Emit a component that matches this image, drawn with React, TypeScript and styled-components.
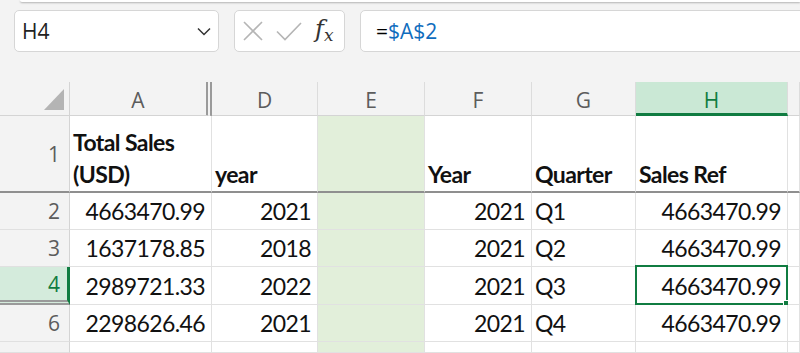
import React from "react";
import styled, { createGlobalStyle, css } from "styled-components";

const GlobalStyle = createGlobalStyle`
  html, body { margin: 0; padding: 0; }
  body {
    background: #f3f3f3;
    font-family: "Open Sans", "Noto Sans", sans-serif;
    overflow: hidden;
  }
`;

const green = "#107c41";
const grid = "#e1e1e1";

const Page = styled.div`
  width: 800px;
  height: 353px;
  overflow: hidden;
  background: #f3f3f3;
  display: flex;
  flex-direction: column;
`;

const TopStrip = styled.div`
  height: 2px;
  margin-left: 20px;
  background: #fff;
  border-bottom-left-radius: 4px;
  box-shadow: 0 1px 2px rgba(0, 0, 0, 0.28);
  flex-shrink: 0;
`;

const Toolbar = styled.div`
  display: flex;
  gap: 15px;
  padding: 8px 0 0 14px;
  height: 42px;
  margin-bottom: 30px;
  flex-shrink: 0;
`;

const Box = styled.div<{ $w?: number }>`
  box-sizing: border-box;
  height: 42px;
  background: #fff;
  border: 1px solid #d6d6d6;
  border-radius: 5px;
  display: flex;
  align-items: center;
  flex-shrink: 0;
  ${(p) => p.$w && css`width: ${p.$w}px;`}
`;

const NameBox = styled(Box)`
  justify-content: space-between;
  padding: 0 6px 0 7px;
  font-size: 21px;
  color: #222;
`;

const ButtonsBox = styled(Box)`
  gap: 13px;
  padding: 0 6px 0 8px;
`;

const Fx = styled.span`
  font-family: "DejaVu Serif", "Liberation Serif", serif;
  font-style: italic;
  font-size: 24px;
  color: #333;
  line-height: 1;
  margin-top: -2px;
  sub {
    font-size: 17px;
    vertical-align: -4px;
  }
`;

const FormulaBox = styled(Box)`
  width: 460px;
  padding-left: 15px;
  font-size: 21px;
  border-top-right-radius: 0;
  border-bottom-right-radius: 0;
`;

const Ref = styled.span`
  color: #0f6cbd;
`;

const Sheet = styled.div`
  display: grid;
  grid-template-columns: 70px 142px 106px 107px 107px 104px 152px 1fr;
  grid-template-rows: 34px 77px 37px 37px 38px 37px 1fr;
  flex: 1;
  background: #fff;
`;

const Corner = styled.div`
  background: #f3f3f3;
  border-right: 1px solid #d4d4d4;
  border-bottom: 1px solid #d4d4d4;
  display: flex;
  align-items: flex-end;
  justify-content: flex-end;
  padding: 0 5px 5px 0;
  box-sizing: border-box;
`;

const ColHead = styled.div<{ $sel?: boolean; $hidden?: boolean }>`
  box-sizing: border-box;
  background: #f3f3f3;
  border-right: 1px solid #dcdcdc;
  border-bottom: 1px solid #d4d4d4;
  display: flex;
  align-items: center;
  justify-content: center;
  font-size: 21px;
  color: #5c5c5c;
  padding-top: 2px;
  ${(p) =>
    p.$hidden &&
    css`
      border-right: 6px double #9a9a9a;
    `}
  ${(p) =>
    p.$sel &&
    css`
      background: #cae8d5;
      color: ${green};
      border-bottom: 3px solid ${green};
      padding-top: 5px;
    `}
`;

const RowHead = styled.div<{ $sel?: boolean; $hidden?: boolean; $freeze?: boolean }>`
  box-sizing: border-box;
  background: #f3f3f3;
  border-right: 1px solid #d4d4d4;
  border-bottom: 1px solid #e0e0e0;
  display: flex;
  align-items: center;
  justify-content: flex-end;
  padding-right: 9px;
  font-size: 21px;
  color: #5c5c5c;
  ${(p) =>
    p.$sel &&
    css`
      background: #d4ebdc;
      color: ${green};
      border-right: 3px solid ${green};
      padding-right: 7px;
    `}
  ${(p) =>
    p.$hidden &&
    css`
      border-bottom: 5px double #9a9a9a;
    `}
  ${(p) =>
    p.$freeze &&
    css`
      border-bottom: 2px solid #8f8f8f;
    `}
`;

const Cell = styled.div<{
  $align?: "left" | "right";
  $bold?: boolean;
  $fill?: boolean;
  $freeze?: boolean;
}>`
  box-sizing: border-box;
  position: relative;
  border-right: 1px solid ${grid};
  border-bottom: 1px solid ${grid};
  background: ${(p) => (p.$fill ? "#e2efda" : "#fff")};
  display: flex;
  align-items: center;
  justify-content: ${(p) => (p.$align === "right" ? "flex-end" : "flex-start")};
  text-align: ${(p) => (p.$align === "right" ? "right" : "left")};
  padding: 0 6px 0 3px;
  font-family: "Lato", "Open Sans", sans-serif;
  font-size: 23px;
  letter-spacing: -0.6px;
  color: #111;
  font-weight: ${(p) => (p.$bold ? 700 : 400)};
  ${(p) =>
    p.$freeze &&
    css`
      border-bottom: 2px solid #8f8f8f;
      align-items: flex-end;
      line-height: 32px;
      padding-bottom: 1px;
    `}
`;

const Selection = styled.div`
  position: absolute;
  left: -1px;
  top: -2px;
  right: -1px;
  bottom: -1px;
  border: 2px solid ${green};
  pointer-events: none;
  &::after {
    content: "";
    position: absolute;
    right: -5px;
    bottom: -5px;
    width: 6px;
    height: 6px;
    background: ${green};
    border: 1px solid #fff;
  }
`;

type Row = { n: string; a: string; d: string; f: string; g: string; h: string };

const rows: Row[] = [
  { n: "2", a: "4663470.99", d: "2021", f: "2021", g: "Q1", h: "4663470.99" },
  { n: "3", a: "1637178.85", d: "2018", f: "2021", g: "Q2", h: "4663470.99" },
  { n: "4", a: "2989721.33", d: "2022", f: "2021", g: "Q3", h: "4663470.99" },
  { n: "6", a: "2298626.46", d: "2021", f: "2021", g: "Q4", h: "4663470.99" },
];

export default function App() {
  return (
    <Page>
      <GlobalStyle />
      <TopStrip />
      <Toolbar>
        <NameBox $w={205}>
          <span>H4</span>
          <svg width="16" height="16" viewBox="0 0 16 16" fill="none">
            <path d="M2 5.5 8 11.5 14 5.5" stroke="#333" strokeWidth="1.5" />
          </svg>
        </NameBox>
        <ButtonsBox $w={111}>
          <svg width="20" height="20" viewBox="0 0 20 20" fill="none">
            <path d="M1 1 19 19M19 1 1 19" stroke="#b5b5b5" strokeWidth="1.6" />
          </svg>
          <svg width="26" height="20" viewBox="0 0 26 20" fill="none">
            <path d="M1 10.5 9 18.5 25 2" stroke="#b5b5b5" strokeWidth="1.6" />
          </svg>
          <Fx>
            f<sub>x</sub>
          </Fx>
        </ButtonsBox>
        <FormulaBox>
          =<Ref>$A$2</Ref>
        </FormulaBox>
      </Toolbar>

      <Sheet>
        <Corner>
          <svg width="20" height="21" viewBox="0 0 20 21">
            <polygon points="20,0 20,21 0,21" fill="#b4b4b4" />
          </svg>
        </Corner>
        <ColHead $hidden>A</ColHead>
        <ColHead>D</ColHead>
        <ColHead>E</ColHead>
        <ColHead>F</ColHead>
        <ColHead>G</ColHead>
        <ColHead $sel>H</ColHead>
        <ColHead />

        <RowHead $freeze>1</RowHead>
        <Cell $freeze $bold>
          Total Sales
          <br />
          (USD)
        </Cell>
        <Cell $freeze $bold>year</Cell>
        <Cell $freeze $fill />
        <Cell $freeze $bold>Year</Cell>
        <Cell $freeze $bold>Quarter</Cell>
        <Cell $freeze $bold>Sales Ref</Cell>
        <Cell $freeze />

        {rows.map((r) => (
          <React.Fragment key={r.n}>
            <RowHead $sel={r.n === "4"} $hidden={r.n === "4"}>
              {r.n}
            </RowHead>
            <Cell $align="right">{r.a}</Cell>
            <Cell $align="right">{r.d}</Cell>
            <Cell $fill />
            <Cell $align="right">{r.f}</Cell>
            <Cell>{r.g}</Cell>
            <Cell $align="right">
              {r.h}
              {r.n === "4" && <Selection />}
            </Cell>
            <Cell />
          </React.Fragment>
        ))}

        <RowHead />
        <Cell />
        <Cell />
        <Cell $fill />
        <Cell />
        <Cell />
        <Cell />
        <Cell />
      </Sheet>
    </Page>
  );
}
